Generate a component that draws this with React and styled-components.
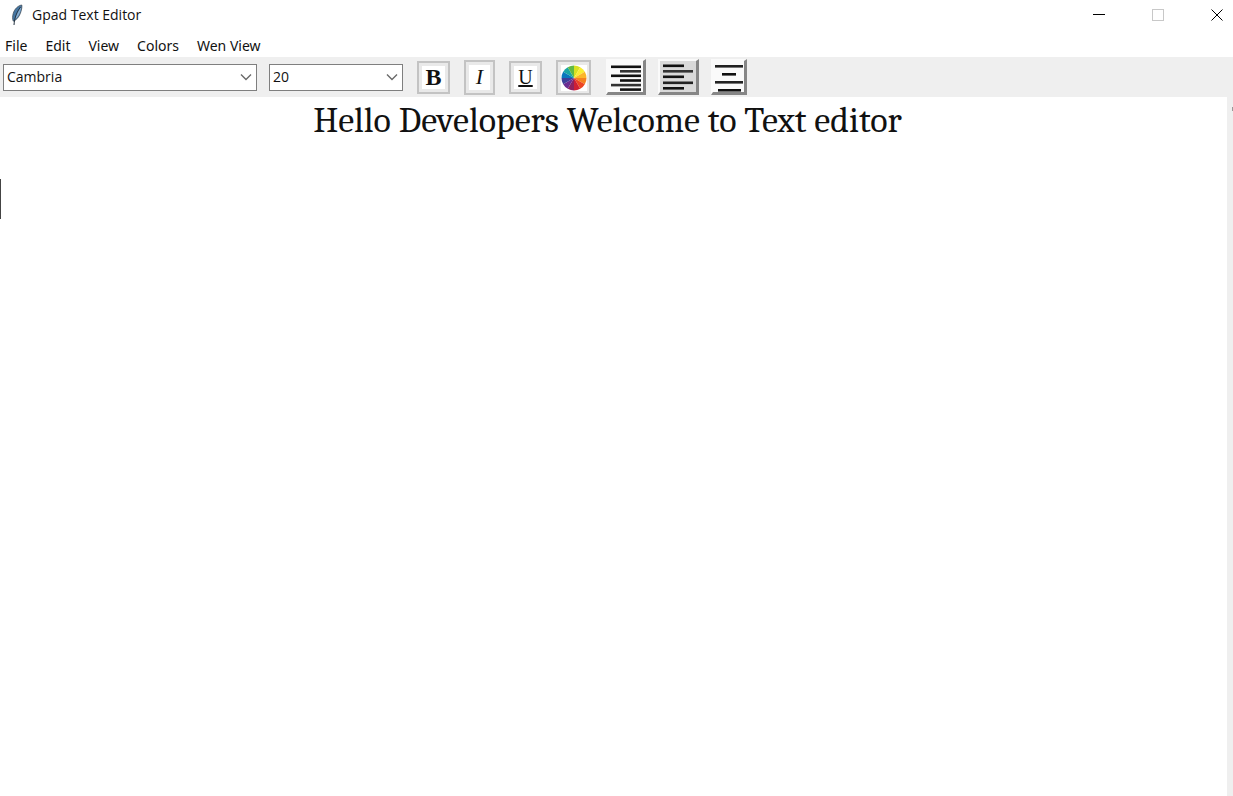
import React from "react";
import styled, { createGlobalStyle } from "styled-components";

const GlobalStyle = createGlobalStyle`
  * { box-sizing: border-box; }
  body {
    margin: 0;
    background: #fff;
    color: #111;
    font-family: "Open Sans", "Noto Sans", sans-serif;
  }
  button, select, textarea { font: inherit; color: inherit; margin: 0; }
`;

const Window = styled.div`
  display: flex;
  flex-direction: column;
  min-height: 100vh;
`;

const TitleBar = styled.header`
  display: flex;
  align-items: center;
  height: 30px;
  padding-left: 9px;
`;

const Title = styled.h1`
  flex: 1;
  margin: 0 0 0 8px;
  font-size: 14px;
  line-height: 20px;
  font-weight: 400;
`;

const WindowControls = styled.div`
  display: flex;
  gap: 27px;
`;

const WindowButton = styled.button`
  display: grid;
  place-items: center;
  width: 32px;
  height: 30px;
  padding: 0;
  border: 0;
  background: none;
`;

const MenuBar = styled.nav`
  display: flex;
  gap: 18px;
  height: 27px;
  padding: 5px 5px 0;
`;

const MenuButton = styled.button`
  align-self: flex-start;
  padding: 0;
  border: 0;
  background: none;
  font-family: "Noto Sans", sans-serif;
  font-size: 14px;
  line-height: 22px;
  white-space: nowrap;
`;

const Toolbar = styled.div`
  display: flex;
  align-items: center;
  height: 40px;
  padding-left: 3px;
  background: #efefef;
`;

const Combo = styled.label`
  display: grid;
  align-items: center;
  width: ${(p) => p.$width}px;
  margin-right: ${(p) => p.$after}px;

  > * { grid-area: 1 / 1; }
  > svg { justify-self: end; margin-right: 5px; pointer-events: none; }
`;

const ComboSelect = styled.select`
  width: 100%;
  height: 27px;
  padding: 0 24px 0 3px;
  appearance: none;
  border: 1px solid #7f7f7f;
  border-radius: 0;
  background: #fff;
  font-size: 14px;
  line-height: 20px;
`;

const FormatGroup = styled.div`
  display: flex;
  align-items: center;
  gap: ${(p) => p.$gap}px;
  margin-right: 15px;
`;

const FormatButton = styled.button`
  display: grid;
  width: ${(p) => p.$width}px;
  height: ${(p) => p.$height}px;
  padding: 3px;
  border: 2px solid #c3c3c3;
  border-radius: 0;
  background: #e9e9e9;
`;

const Face = styled.span`
  display: grid;
  place-items: center;
  background: #fff;
  font-family: "Liberation Serif", serif;
  font-size: 22px;
  line-height: 22px;
`;

const BoldFace = styled(Face)`
  font-size: 24px;
  font-weight: 700;
`;

const ItalicFace = styled(Face)`
  font-style: italic;
`;

const UnderlineFace = styled(Face)`
  font-size: 20px;
  text-decoration: underline 2px;
  text-underline-offset: 1px;
`;

const AlignButton = styled.button`
  display: grid;
  place-items: center;
  width: ${(p) => p.$width}px;
  height: 36px;
  padding: 0;
  border: solid;
  border-width: 2px 3px 3px 2px;
  border-color: #fafafa #868686 #868686 #fafafa;
  border-radius: 0;
  background: ${(p) => (p.$pressed ? "#d9d9d9" : "#fafafa")};
`;

const EditorArea = styled.main`
  position: relative;
  display: flex;
  flex: 1;
`;

const Editor = styled.textarea`
  flex: 1;
  min-width: 0;
  padding: 4px 12px 4px 0;
  border: 0;
  outline: 0;
  resize: none;
  overflow: hidden;
  background: #fff;
  font-family: Cambria, Caladea, "Liberation Serif", serif;
  font-size: 36px;
  line-height: 40px;
  text-align: center;
`;

const Caret = styled.span`
  position: absolute;
  left: 0;
  top: 82px;
  width: 1px;
  height: 40px;
  background: #444;
`;

const ScrollTrack = styled.div`
  display: flex;
  justify-content: flex-end;
  width: 6px;
  padding-top: 10px;
  background: #efefef;
`;

const ScrollArrow = styled.span`
  width: 1px;
  height: 4px;
  background: #999;
`;

const Feather = () => (
  <svg width="15" height="22" viewBox="0 0 15 22" aria-hidden="true">
    <path d="M12.800 1C9 1.500 5.500 5 4.200 9.500C3.300 12.500 3.400 15 4.200 17.200C7.500 16 10 13 11.300 9.500C12.400 6.500 13.200 3.500 12.800 1Z" fill="#4677a3" stroke="#3c4650" strokeWidth=".7" />
    <path d="M12 3C9.500 6 7 10.500 5.800 15.500C8.500 14 10.300 10.500 11.300 7.500C11.900 5.700 12.100 4.200 12 3Z" fill="#86add0" />
    <path d="M11.500 3C8 8 5.600 13 5 21" fill="none" stroke="#22303e" strokeWidth="1" />
  </svg>
);

const Chevron = () => (
  <svg width="12" height="8" viewBox="0 0 12 8" aria-hidden="true">
    <path d="M1 1.500 6 6.500 11 1.500" fill="none" stroke="#6a6a6a" strokeWidth="1.400" />
  </svg>
);

const WHEEL = [
  "#d9e021", "#f9ed32", "#fbb62a", "#f58220", "#ed4523", "#cf1f35",
  "#8f2260", "#6b2c91", "#3d3f99", "#0877bd", "#19a5a5", "#5fb946",
];

const rim = (i) => {
  const a = (i * Math.PI) / 6;
  return `${(13 + 12.5 * Math.sin(a)).toFixed(2)} ${(13 - 12.5 * Math.cos(a)).toFixed(2)}`;
};

const ColorWheel = () => (
  <svg width="26" height="26" viewBox="0 0 26 26" aria-hidden="true">
    {WHEEL.map((color, i) => (
      <path key={color} d={`M13 13 L${rim(i)} A12.5 12.5 0 0 1 ${rim(i + 1)} Z`} fill={color} />
    ))}
  </svg>
);

const Lines = ({ width, rows }) => (
  <svg width={width} height="30" viewBox={`0 0 ${width} 30`} aria-hidden="true">
    {rows.map(([x, y, w, color = "#111"]) => (
      <rect key={y} x={x} y={y} width={w} height="2.6" fill={color} />
    ))}
  </svg>
);

const RIGHT_ROWS = [
  [3, 3.500, 30], [12, 8, 21, "#333"], [3, 12.500, 30], [12, 17.200, 21], [3, 21.800, 30, "#333"], [12, 26.300, 21],
];
const LEFT_ROWS = [
  [3, 2.500, 21], [3, 8, 30, "#333"], [3, 13.500, 21], [3, 19.500, 30, "#222"], [3, 25, 21],
];
const CENTER_ROWS = [
  [1, 3, 28, "#222"], [8, 11, 14], [1, 19, 28, "#222"], [4, 27, 23],
];

const MENUS = ["File", "Edit", "View", "Colors", "Wen View"];

export default function App() {
  return (
    <Window>
      <GlobalStyle />
      <TitleBar>
        <Feather />
        <Title>Gpad Text Editor</Title>
        <WindowControls>
          <WindowButton aria-label="Minimize">
            <svg width="12" height="12"><path d="M0 5.500H12" stroke="#000" /></svg>
          </WindowButton>
          <WindowButton aria-label="Maximize" disabled>
            <svg width="12" height="12"><rect x=".5" y=".5" width="11" height="11" fill="none" stroke="#c8c8c8" /></svg>
          </WindowButton>
          <WindowButton aria-label="Close">
            <svg width="12" height="12"><path d="M.5.5 11.500 11.500M11.500.5.5 11.500" stroke="#000" strokeWidth="1" /></svg>
          </WindowButton>
        </WindowControls>
      </TitleBar>
      <MenuBar>
        {MENUS.map((name) => (
          <MenuButton key={name}>{name}</MenuButton>
        ))}
      </MenuBar>
      <Toolbar>
        <Combo $width={254} $after={12}>
          <ComboSelect aria-label="Font family" defaultValue="Cambria">
            <option>Cambria</option>
          </ComboSelect>
          <Chevron />
        </Combo>
        <Combo $width={134} $after={14}>
          <ComboSelect aria-label="Font size" defaultValue="20">
            <option>20</option>
          </ComboSelect>
          <Chevron />
        </Combo>
        <FormatGroup $gap={14}>
          <FormatButton $width={33} $height={33} aria-label="Bold"><BoldFace>B</BoldFace></FormatButton>
          <FormatButton $width={31} $height={35} aria-label="Italic"><ItalicFace>I</ItalicFace></FormatButton>
          <FormatButton $width={33} $height={33} aria-label="Underline"><UnderlineFace>U</UnderlineFace></FormatButton>
          <FormatButton $width={35} $height={35} aria-label="Text color"><Face><ColorWheel /></Face></FormatButton>
        </FormatGroup>
        <FormatGroup $gap={12}>
          <AlignButton $width={40} aria-label="Align right"><Lines width={35} rows={RIGHT_ROWS} /></AlignButton>
          <AlignButton $width={41} $pressed aria-label="Align left"><Lines width={36} rows={LEFT_ROWS} /></AlignButton>
          <AlignButton $width={36} aria-label="Align center"><Lines width={30} rows={CENTER_ROWS} /></AlignButton>
        </FormatGroup>
      </Toolbar>
      <EditorArea>
        <Editor aria-label="Document" spellCheck={false} defaultValue="Hello Developers Welcome to Text editor" />
        <Caret />
        <ScrollTrack>
          <ScrollArrow />
        </ScrollTrack>
      </EditorArea>
    </Window>
  );
}
